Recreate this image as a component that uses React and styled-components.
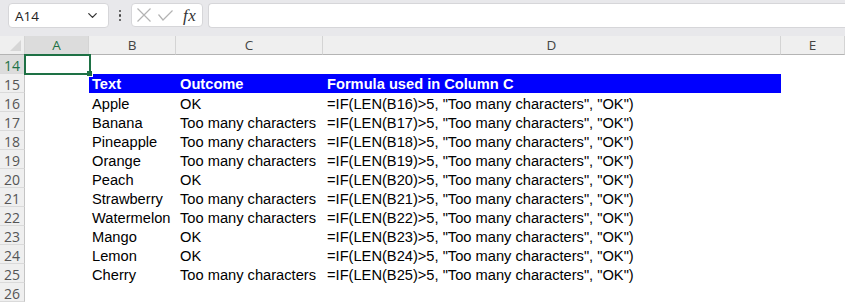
import React from "react";
import styled, { createGlobalStyle, css } from "styled-components";
import { ChevronDown } from "lucide-react";

const Global = createGlobalStyle`
  html, body { margin: 0; padding: 0; background: #ffffff; overflow: hidden; }
  #root { width: 845px; height: 302px; overflow: hidden; }
`;

const Page = styled.div`
  width: 845px;
  height: 302px;
  display: flex;
  flex-direction: column;
  background: #fff;
`;

const Toolbar = styled.div`
  height: 36px;
  flex: none;
  box-sizing: border-box;
  background: #e8e8eb;
  display: flex;
  align-items: flex-start;
  padding: 3px 0 0 8px;
`;

const NameBox = styled.div`
  width: 101px;
  height: 25px;
  box-sizing: border-box;
  background: #fff;
  border: 1px solid #d6d6d9;
  border-radius: 4px;
  display: flex;
  align-items: center;
  justify-content: space-between;
  padding: 0 8px 0 6px;
  font-family: "Open Sans", "Noto Sans", sans-serif;
  font-size: 13.5px;
  color: #222;
`;

const Dots = styled.div`
  width: 22px;
  height: 25px;
  display: flex;
  flex-direction: column;
  align-items: center;
  justify-content: center;
  gap: 2px;
  span {
    width: 2.5px;
    height: 2.5px;
    border-radius: 50%;
    background: #444;
  }
`;

const FxBox = styled.div`
  width: 72px;
  height: 24px;
  box-sizing: border-box;
  background: #fff;
  border: 1px solid #d6d6d9;
  border-radius: 4px;
  display: flex;
  align-items: center;
  padding: 0 0 0 5px;
`;

const IconSlot = styled.span`
  display: flex;
  align-items: center;
  margin-right: ${(p) => p.$gap}px;
`;

const Fx = styled.span`
  font-family: "Liberation Serif", "DejaVu Serif", serif;
  font-style: italic;
  font-size: 17px;
  color: #333;
  letter-spacing: 0.5px;
  line-height: 1;
`;

const FormulaInput = styled.div`
  flex: 1;
  height: 25px;
  box-sizing: border-box;
  margin-left: 5px;
  background: #fff;
  border: 1px solid #d6d6d9;
  border-right: none;
  border-radius: 4px 0 0 4px;
`;

const Sheet = styled.div`
  display: grid;
  grid-template-columns: 25px 64px 87px 147px 458px 1fr;
  grid-auto-rows: 19px;
  font-family: "Liberation Sans", Arial, sans-serif;
  font-size: 14.67px;
  color: #000;
`;

const Corner = styled.div`
  background: #efefef;
  border-right: 1px solid #d4d4d4;
  border-bottom: 1px solid #b4b4b4;
  box-sizing: border-box;
  display: flex;
  align-items: flex-end;
  justify-content: flex-end;
  padding: 0 3px 3px 0;
`;

const ColHead = styled.div`
  box-sizing: border-box;
  background: ${(p) => (p.$active ? "#dcdcdc" : "#efefef")};
  color: ${(p) => (p.$active ? "#1e7145" : "#444")};
  border-right: 1px solid #d4d4d4;
  border-bottom: 1px solid #b4b4b4;
  font-family: "Open Sans", "Noto Sans", sans-serif;
  font-size: 13.5px;
  display: flex;
  align-items: center;
  justify-content: center;
  line-height: 1;
  padding-top: 1px;
`;

const RowHead = styled.div`
  box-sizing: border-box;
  background: ${(p) => (p.$active ? "#dcdcdc" : "#efefef")};
  color: ${(p) => (p.$active ? "#1e7145" : "#555")};
  border-right: 1px solid #c4c4c4;
  border-bottom: 1px solid #dadada;
  font-family: "Open Sans", "Noto Sans", sans-serif;
  font-size: 14px;
  display: flex;
  align-items: center;
  justify-content: center;
  line-height: 1;
  padding-top: 4px;
`;

const Cell = styled.div`
  box-sizing: border-box;
  position: relative;
  white-space: nowrap;
  overflow: visible;
  padding-left: ${(p) => p.$pad ?? 3}px;
  padding-top: 2px;
  line-height: 19px;
  ${(p) =>
    p.$header &&
    css`
      background: #0000ff;
      color: #fff;
      font-weight: bold;
      padding-top: 1px;
    `}
`;

const Selection = styled.div`
  position: absolute;
  top: -1px;
  left: -1px;
  right: -2px;
  bottom: -1px;
  border: 2px solid #1e7145;
  z-index: 2;
  pointer-events: none;
`;

const Handle = styled.div`
  position: absolute;
  right: -4px;
  bottom: -4px;
  width: 5px;
  height: 5px;
  background: #1e7145;
  border: 1px solid #fff;
  border-top: none;
  border-left: none;
`;

const rows = [
  ["Apple", "OK", 16],
  ["Banana", "Too many characters", 17],
  ["Pineapple", "Too many characters", 18],
  ["Orange", "Too many characters", 19],
  ["Peach", "OK", 20],
  ["Strawberry", "Too many characters", 21],
  ["Watermelon", "Too many characters", 22],
  ["Mango", "OK", 23],
  ["Lemon", "OK", 24],
  ["Cherry", "Too many characters", 25],
];

const formula = (n) => `=IF(LEN(B${n})>5, "Too many characters", "OK")`;

const CancelIcon = () => (
  <svg width="14" height="14" viewBox="0 0 14 14">
    <path d="M0.5 0.5 L13.5 13.5 M13.5 0.5 L0.5 13.5" stroke="#b3b3b3" strokeWidth="1.2" fill="none" />
  </svg>
);

const EnterIcon = () => (
  <svg width="15" height="11" viewBox="0 0 15 11">
    <path d="M0.5 4.5 L5 10 L14.5 0.5" stroke="#b3b3b3" strokeWidth="1.2" fill="none" />
  </svg>
);

export default function App() {
  return (
    <Page>
      <Global />
      <Toolbar>
        <NameBox>
          <span>A14</span>
          <ChevronDown size={15} strokeWidth={2} color="#333" />
        </NameBox>
        <Dots>
          <span />
          <span />
          <span />
        </Dots>
        <FxBox>
          <IconSlot $gap={7}>
            <CancelIcon />
          </IconSlot>
          <IconSlot $gap={10}>
            <EnterIcon />
          </IconSlot>
          <Fx>fx</Fx>
        </FxBox>
        <FormulaInput />
      </Toolbar>
      <Sheet>
        <Corner>
          <svg width="11" height="11" viewBox="0 0 11 11">
            <polygon points="11,0 11,11 0,11" fill="#d6d6d6" />
          </svg>
        </Corner>
        <ColHead $active>A</ColHead>
        <ColHead>B</ColHead>
        <ColHead>C</ColHead>
        <ColHead>D</ColHead>
        <ColHead>E</ColHead>

        <RowHead $active>14</RowHead>
        <Cell>
          <Selection>
            <Handle />
          </Selection>
        </Cell>
        <Cell />
        <Cell />
        <Cell />
        <Cell />

        <RowHead>15</RowHead>
        <Cell />
        <Cell $header>Text</Cell>
        <Cell $header $pad={4}>Outcome</Cell>
        <Cell $header $pad={4}>Formula used in Column C</Cell>
        <Cell />

        {rows.map(([fruit, outcome, n]) => (
          <React.Fragment key={n}>
            <RowHead>{n}</RowHead>
            <Cell />
            <Cell>{fruit}</Cell>
            <Cell $pad={4}>{outcome}</Cell>
            <Cell $pad={4}>{formula(n)}</Cell>
            <Cell />
          </React.Fragment>
        ))}

        <RowHead>26</RowHead>
        <Cell />
        <Cell />
        <Cell />
        <Cell />
        <Cell />
      </Sheet>
    </Page>
  );
}
